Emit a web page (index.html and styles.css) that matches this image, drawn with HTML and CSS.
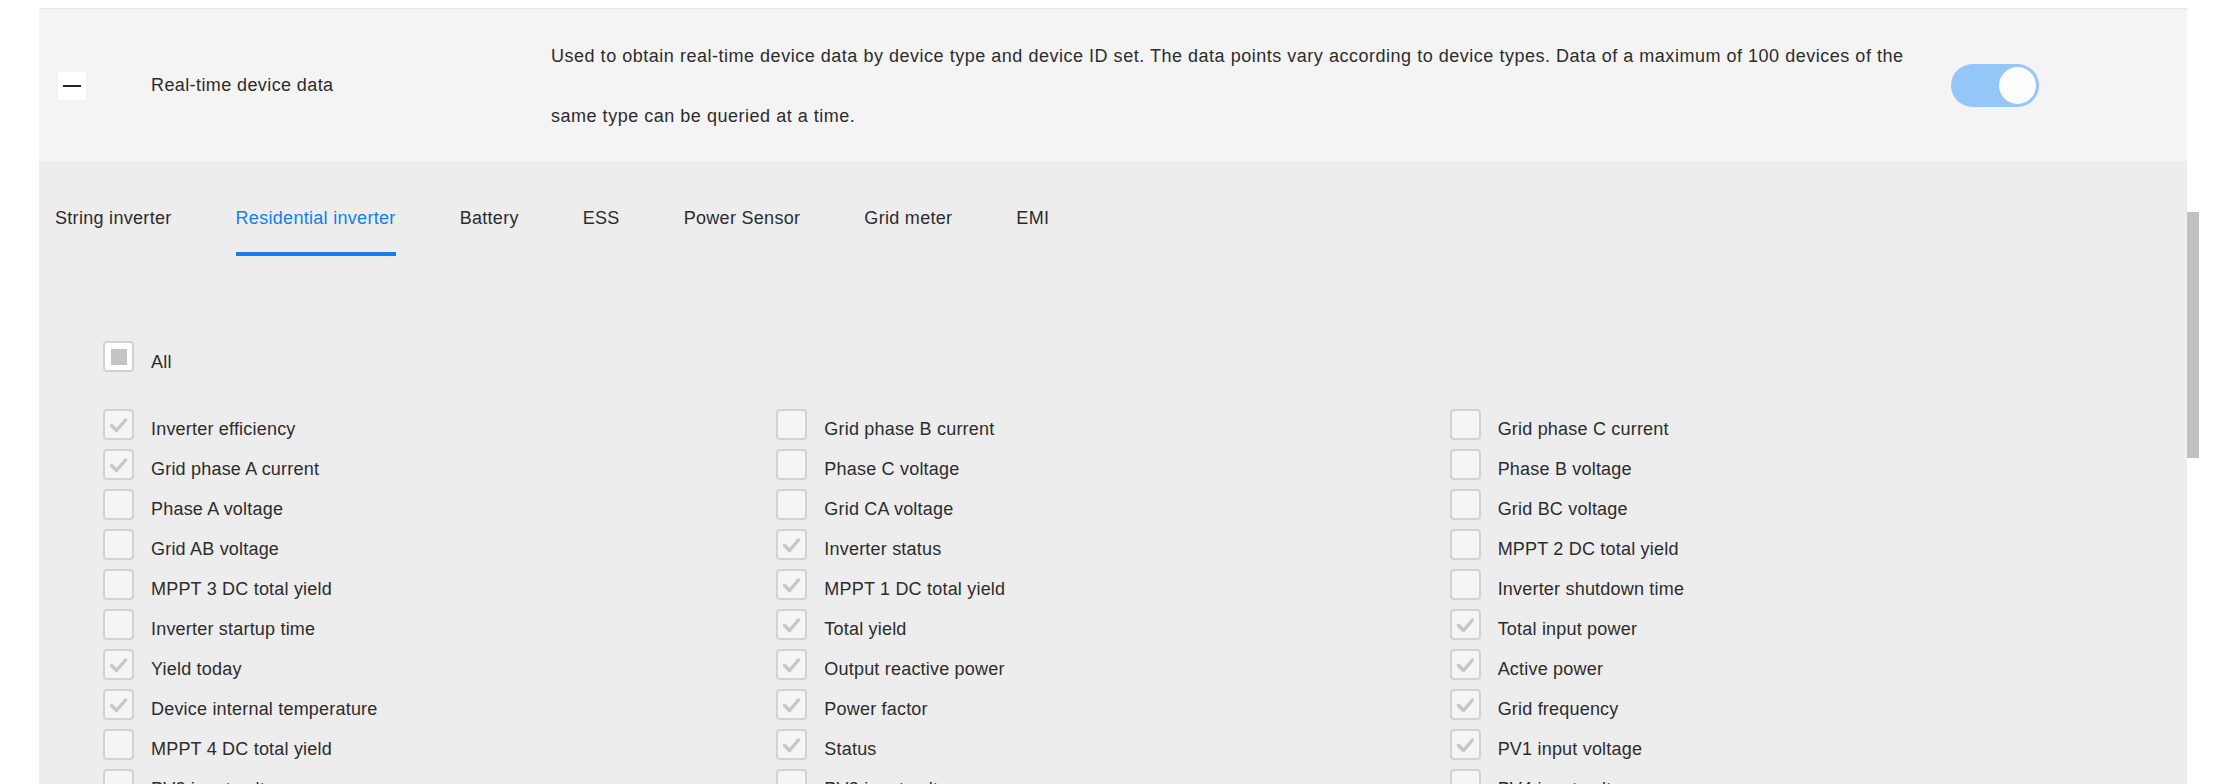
FILE: index.html
```html
<!DOCTYPE html>
<html lang="en">
<head>
<meta charset="utf-8">
<title>Real-time device data</title>
<link rel="stylesheet" href="styles.css">
</head>
<body>
<div class="page">
  <div class="panel">
    <div class="head">
      <button class="collapse" type="button" aria-label="Collapse"><span class="minus"></span></button>
      <div class="title">Real-time device data</div>
      <div class="desc">Used to obtain real-time device data by device type and device ID set. The data points vary according to device types. Data of a maximum of 100 devices of the same type can be queried at a time.</div>
      <div class="switch"><span class="knob"></span></div>
    </div>
    <div class="content">
      <div class="tabs">
        <div class="tab">String inverter</div>
        <div class="tab active">Residential inverter</div>
        <div class="tab">Battery</div>
        <div class="tab">ESS</div>
        <div class="tab">Power Sensor</div>
        <div class="tab">Grid meter</div>
        <div class="tab">EMI</div>
      </div>
      <div class="checks">
        <div class="item all"><span class="box partial"><span class="dot"></span></span><span class="label">All</span></div>
        <div class="grid">
          <div class="item"><span class="box on"><svg viewBox="0 0 31 31"><path d="M8.5 16.5 L13.5 21.5 L22.5 11"/></svg></span><span class="label">Inverter efficiency</span></div>
          <div class="item"><span class="box"></span><span class="label">Grid phase B current</span></div>
          <div class="item"><span class="box"></span><span class="label">Grid phase C current</span></div>

          <div class="item"><span class="box on"><svg viewBox="0 0 31 31"><path d="M8.5 16.5 L13.5 21.5 L22.5 11"/></svg></span><span class="label">Grid phase A current</span></div>
          <div class="item"><span class="box"></span><span class="label">Phase C voltage</span></div>
          <div class="item"><span class="box"></span><span class="label">Phase B voltage</span></div>

          <div class="item"><span class="box"></span><span class="label">Phase A voltage</span></div>
          <div class="item"><span class="box"></span><span class="label">Grid CA voltage</span></div>
          <div class="item"><span class="box"></span><span class="label">Grid BC voltage</span></div>

          <div class="item"><span class="box"></span><span class="label">Grid AB voltage</span></div>
          <div class="item"><span class="box on"><svg viewBox="0 0 31 31"><path d="M8.5 16.5 L13.5 21.5 L22.5 11"/></svg></span><span class="label">Inverter status</span></div>
          <div class="item"><span class="box"></span><span class="label">MPPT 2 DC total yield</span></div>

          <div class="item"><span class="box"></span><span class="label">MPPT 3 DC total yield</span></div>
          <div class="item"><span class="box on"><svg viewBox="0 0 31 31"><path d="M8.5 16.5 L13.5 21.5 L22.5 11"/></svg></span><span class="label">MPPT 1 DC total yield</span></div>
          <div class="item"><span class="box"></span><span class="label">Inverter shutdown time</span></div>

          <div class="item"><span class="box"></span><span class="label">Inverter startup time</span></div>
          <div class="item"><span class="box on"><svg viewBox="0 0 31 31"><path d="M8.5 16.5 L13.5 21.5 L22.5 11"/></svg></span><span class="label">Total yield</span></div>
          <div class="item"><span class="box on"><svg viewBox="0 0 31 31"><path d="M8.5 16.5 L13.5 21.5 L22.5 11"/></svg></span><span class="label">Total input power</span></div>

          <div class="item"><span class="box on"><svg viewBox="0 0 31 31"><path d="M8.5 16.5 L13.5 21.5 L22.5 11"/></svg></span><span class="label">Yield today</span></div>
          <div class="item"><span class="box on"><svg viewBox="0 0 31 31"><path d="M8.5 16.5 L13.5 21.5 L22.5 11"/></svg></span><span class="label">Output reactive power</span></div>
          <div class="item"><span class="box on"><svg viewBox="0 0 31 31"><path d="M8.5 16.5 L13.5 21.5 L22.5 11"/></svg></span><span class="label">Active power</span></div>

          <div class="item"><span class="box on"><svg viewBox="0 0 31 31"><path d="M8.5 16.5 L13.5 21.5 L22.5 11"/></svg></span><span class="label">Device internal temperature</span></div>
          <div class="item"><span class="box on"><svg viewBox="0 0 31 31"><path d="M8.5 16.5 L13.5 21.5 L22.5 11"/></svg></span><span class="label">Power factor</span></div>
          <div class="item"><span class="box on"><svg viewBox="0 0 31 31"><path d="M8.5 16.5 L13.5 21.5 L22.5 11"/></svg></span><span class="label">Grid frequency</span></div>

          <div class="item"><span class="box"></span><span class="label">MPPT 4 DC total yield</span></div>
          <div class="item"><span class="box on"><svg viewBox="0 0 31 31"><path d="M8.5 16.5 L13.5 21.5 L22.5 11"/></svg></span><span class="label">Status</span></div>
          <div class="item"><span class="box on"><svg viewBox="0 0 31 31"><path d="M8.5 16.5 L13.5 21.5 L22.5 11"/></svg></span><span class="label">PV1 input voltage</span></div>

          <div class="item"><span class="box"></span><span class="label">PV2 input voltage</span></div>
          <div class="item"><span class="box"></span><span class="label">PV3 input voltage</span></div>
          <div class="item"><span class="box"></span><span class="label">PV4 input voltage</span></div>
        </div>
      </div>
    </div>
  </div>
  <div class="scroll-thumb"></div>
</div>
</body>
</html>
```

FILE: styles.css
```css
html, body {
  height: 100%;
  overflow: hidden;
}

body {
  margin: 0;
  background: #ffffff;
  font-family: "Liberation Sans", Arial, Helvetica, sans-serif;
  font-size: 18px;
  letter-spacing: 0.2px;
  color: #2c2c2c;
}

.page {
  position: relative;
  padding: 8px 45px 0 39px;
}

.panel {
  border-top: 1px solid #e6e6e6;
}

/* ---------- header row ---------- */
.head {
  display: flex;
  align-items: center;
  height: 153px;
  padding-left: 19px;
  background: #f4f4f4;
  border-bottom: 1px solid #e6e6e6;
}

.collapse {
  flex: none;
  display: flex;
  align-items: center;
  justify-content: center;
  width: 28px;
  height: 28px;
  padding: 0;
  border: 0;
  border-radius: 2px;
  background: #ffffff;
}

.minus {
  display: block;
  width: 18px;
  height: 2px;
  background: #222222;
}

.title {
  flex: none;
  width: 400px;
  margin-left: 65px;
  letter-spacing: 0.4px;
}

.desc {
  flex: none;
  width: 1380px;
  line-height: 60px;
  letter-spacing: 0.52px;
}

.switch {
  flex: none;
  display: flex;
  align-items: center;
  justify-content: flex-end;
  box-sizing: border-box;
  width: 88px;
  height: 43px;
  margin-left: 20px;
  padding-right: 3px;
  border-radius: 22px;
  background: #94c6f7;
}

.knob {
  display: block;
  width: 37px;
  height: 37px;
  border-radius: 50%;
  background: #fdfdfe;
}

/* ---------- tab bar ---------- */
.content {
  background: #ededed;
  height: 640px;
}

.tabs {
  display: flex;
  gap: 64px;
  margin: 0 16px;
  border-bottom: 1px solid #e9e9e9;
}

.tab {
  box-sizing: border-box;
  height: 93px;
  padding-top: 43px;
  line-height: 24px;
  letter-spacing: 0.3px;
  border-bottom: 4px solid transparent;
  white-space: nowrap;
}

.tab.active {
  color: #127ef0;
  border-bottom-color: #127ef0;
}

/* ---------- checkboxes ---------- */
.checks {
  padding: 84px 64px 0 64px;
}

.grid {
  display: grid;
  grid-template-columns: repeat(3, 1fr);
  grid-auto-rows: 31px;
  row-gap: 9px;
  margin-top: 37px;
}

.item {
  display: flex;
  align-items: flex-start;
  height: 31px;
}

.box {
  flex: none;
  display: flex;
  align-items: center;
  justify-content: center;
  box-sizing: border-box;
  width: 31px;
  height: 31px;
  border: 2px solid #d2d2d2;
  border-radius: 4px;
  background: #f5f5f5;
}

.box svg {
  flex: none;
  width: 31px;
  height: 31px;
  margin: -2px;
  fill: none;
  stroke: #c6c6c6;
  stroke-width: 3.4;
  stroke-linecap: round;
  stroke-linejoin: round;
}

.box.partial {
  background: #ffffff;
}

.dot {
  display: block;
  width: 16px;
  height: 16px;
  background: #c4c4c4;
}

.label {
  margin-left: 17px;
  padding-top: 10px;
  line-height: 21px;
  white-space: nowrap;
}

.all .label {
  padding-top: 11px;
}

/* ---------- scrollbar overlay ---------- */
.scroll-thumb {
  position: absolute;
  top: 212px;
  left: 2187px;
  width: 12px;
  height: 246px;
  background: #c1c1c1;
}
```
